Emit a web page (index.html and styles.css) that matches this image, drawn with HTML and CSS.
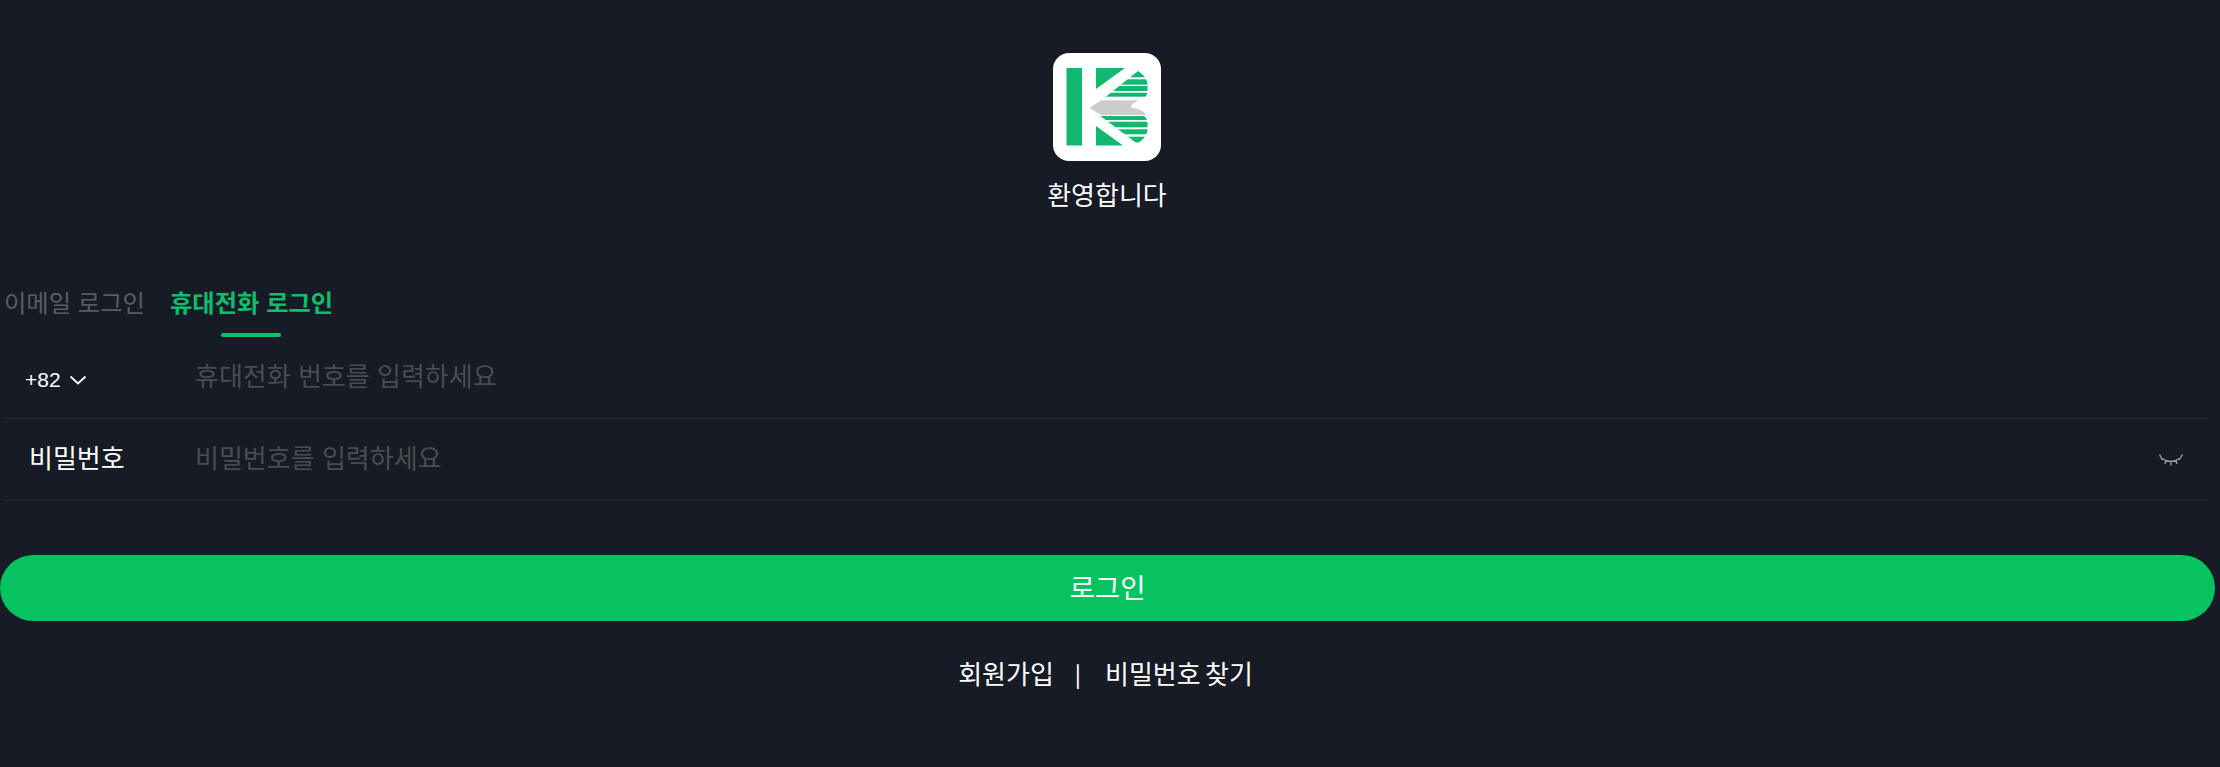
FILE: index.html
```html
<!DOCTYPE html>
<html lang="ko">
<head>
<meta charset="utf-8">
<title>로그인</title>
<link rel="stylesheet" href="styles.css">
</head>
<body>
<main class="page">
  <header class="brand">
    <svg class="logo" viewBox="0 0 108 108" aria-hidden="true">
      <defs>
        <clipPath id="lobe-top"><path d="M85 18C91 22 94.500 27 94.500 32V38C94.500 41 93 44 90 46H50Z"/></clipPath>
        <clipPath id="lobe-bottom"><path d="M46 62H90C93 64 94.500 67 94.500 70V76C94.500 81 91 86 85 90L82 89Z"/></clipPath>
      </defs>
      <rect width="108" height="108" rx="16" fill="#fff"/>
      <rect x="13.500" y="15" width="15.500" height="77.500" fill="#12b86f"/>
      <path d="M43 15H72L43 36Z" fill="#12b86f"/>
      <path d="M43 73L70 92.500H43Z" fill="#12b86f"/>
      <path d="M36.500 55L48 47.300H86C83 49 79 50 77.500 54.500C83 55 90 57 93 62H48Z" fill="#cdcdcd"/>
      <g fill="#12b86f" clip-path="url(#lobe-top)">
        <rect x="40" y="18" width="60" height="6.300"/>
        <rect x="40" y="26.300" width="60" height="5.400"/>
        <rect x="40" y="33" width="60" height="5"/>
        <rect x="40" y="39.700" width="60" height="4"/>
      </g>
      <g fill="#12b86f" clip-path="url(#lobe-bottom)">
        <rect x="40" y="63" width="60" height="4"/>
        <rect x="40" y="68.700" width="60" height="5.600"/>
        <rect x="40" y="76.300" width="60" height="5"/>
        <rect x="40" y="83.700" width="60" height="6"/>
      </g>
    </svg>
    <h1 class="welcome">환영합니다</h1>
  </header>
  <nav class="tabs">
    <a class="tab">이메일 로그인</a>
    <a class="tab tab-active">휴대전화 로그인</a>
  </nav>
  <form class="form">
    <div class="row">
      <div class="label label-code">+82
        <svg class="chev" viewBox="0 0 18 10" aria-hidden="true"><path d="M1.500 1.500L9 8.500L16.500 1.500" fill="none" stroke="#fff" stroke-width="1.800"/></svg>
      </div>
      <span class="ph">휴대전화 번호를 입력하세요</span>
    </div>
    <div class="row">
      <div class="label label-pw">비밀번호</div>
      <span class="ph">비밀번호를 입력하세요</span>
      <svg class="eye" viewBox="0 0 24 12" aria-hidden="true">
        <path d="M3 4.500Q12 10.500 20.500 4.500M0.500 0.500L3.500 6M7 6.500L5.800 10M12 8V11.500M17 6.500L18 10M23.500 0.500L20 6" fill="none" stroke="#a0a0a0" stroke-width="1.300"/>
      </svg>
    </div>
    <button class="submit" type="button">로그인</button>
  </form>
  <div class="links">
    <a>회원가입</a>
    <span class="sep">|</span>
    <a class="link-find">비밀번호 찾기</a>
  </div>
</main>
</body>
</html>
```
FILE: styles.css
```css
* { box-sizing: border-box; }
html, body { margin: 0; height: 100%; }
body {
  background: #161b25;
  color: #fff;
  font-family: "Noto Sans CJK KR", "Liberation Sans", sans-serif;
  overflow: hidden;
}
.page { width: 2214px; padding-top: 53px; }
.brand { display: flex; flex-direction: column; align-items: center; }
.logo { width: 108px; height: 108px; display: block; }
.welcome { margin: 14px 0 0; font-size: 26px; font-weight: 400; line-height: 38px; }
.tabs { display: flex; gap: 25px; margin-top: 71px; padding-left: 4px; height: 53px; }
.tab { position: relative; font-size: 24.300px; line-height: 36px; color: #5b5d60; }
.tab-active { color: #10bd6a; font-weight: 600; }
.tab-active::after {
  content: ""; position: absolute; left: 50%; bottom: 0; width: 60px; height: 4px;
  margin-left: -31px; border-radius: 2px; background: #10bd6a;
}
.row {
  display: flex; align-items: center; height: 82px; margin-left: 4px; margin-right: 6px;
  padding-bottom: 6px; border-bottom: 1px solid #25292f;
}
.label { width: 191px; flex: none; }
.label-code { display: flex; align-items: center; gap: 8px; padding-left: 21px; padding-top: 11px; font: 21px "Liberation Sans", sans-serif; }
.label-pw { padding-left: 25px; font-size: 26px; }
.chev { width: 18px; height: 10px; }
.ph { font-size: 26px; color: #4a4c50; flex: 1; }
.eye { width: 24px; height: 12px; margin-right: 25px; margin-top: 6px; }
.submit {
  display: block; width: 2215px; height: 66px; margin-top: 54px; padding: 0 0 5px; border: 0; border-radius: 33px;
  background: #06c35f; color: #fff; font: inherit; font-size: 27.500px;
}
.form { display: block; }
.links { display: flex; justify-content: center; align-items: center; gap: 24px; margin-top: 33px; padding-right: 3px; font-size: 26px; line-height: 38px; }
.link-find { word-spacing: -3px; }
.sep { font-size: 22px; font-weight: 500; margin-left: -3px; }
```
